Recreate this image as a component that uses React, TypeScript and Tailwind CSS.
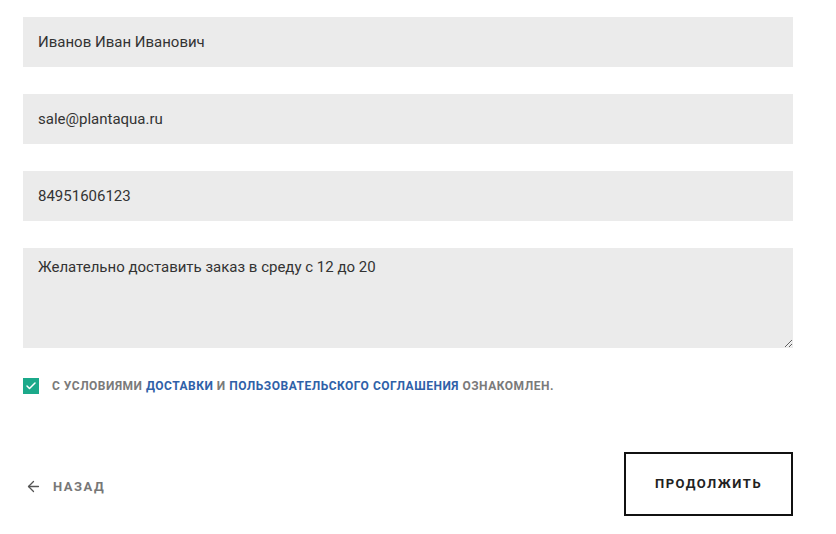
import { ArrowLeft, Check } from "lucide-react";

const fields = ["Иванов Иван Иванович", "sale@plantaqua.ru", "84951606123"];

export default function App() {
  return (
    <div className="w-[836px] h-[534px] bg-white px-[23px] pt-[17px] font-['Roboto',sans-serif] text-[#333]">
      <div className="flex flex-col gap-[27px] w-[770px]">
        {fields.map((f) => (
          <input
            key={f}
            readOnly
            value={f}
            className="h-[50px] bg-[#ebebeb] px-[15px] text-[15px] text-[#333] outline-none"
          />
        ))}
        <textarea
          readOnly
          defaultValue="Желательно доставить заказ в среду с 12 до 20"
          className="h-[100px] bg-[#ebebeb] px-[15px] pt-[9px] text-[15px] leading-[20px] text-[#333] outline-none resize-y"
        />
      </div>
      <div className="flex items-center gap-[13px] mt-[30px] h-[16px]">
        <div className="w-[16px] h-[16px] bg-[#1ba98a] flex items-center justify-center">
          <Check size={12} strokeWidth={3} className="text-white" />
        </div>
        <p className="text-[12px] font-bold uppercase tracking-[0.5px] text-[#7a7a7a]">
          С условиями <span className="text-[#2f61a8]">доставки</span> и{" "}
          <span className="text-[#2f61a8]">пользовательского соглашения</span> ознакомлен.
        </p>
      </div>
      <div className="flex items-center justify-between w-[770px] mt-[58px]">
        <div className="flex items-center gap-[11px] pl-[2px] pt-[5px] text-[#555]">
          <ArrowLeft size={17} strokeWidth={1.8} />
          <span className="text-[13px] font-bold uppercase tracking-[1.5px] text-[#777]">Назад</span>
        </div>
        <button className="w-[169px] h-[64px] border-2 border-[#111] text-[13px] font-bold uppercase tracking-[1.5px] text-[#222]">
          Продолжить
        </button>
      </div>
    </div>
  );
}
